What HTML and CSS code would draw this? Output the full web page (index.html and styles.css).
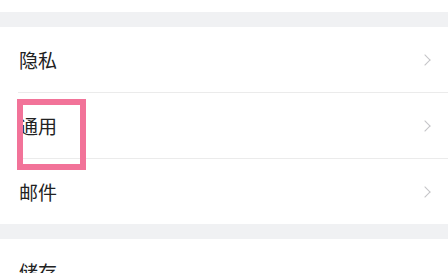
FILE: index.html
```html
<!DOCTYPE html>
<html lang="zh-CN">
<head>
    <meta charset="UTF-8">
    <meta name="viewport" content="width=device-width, initial-scale=1.0">
    <title>设置</title>
    <link rel="stylesheet" href="styles.css">
</head>
<body>
    <div class="screen">
        <div class="top-space"></div>
        <div class="gap"></div>
        <div class="group">
            <div class="row">
                <span class="label">隐私</span>
                <span class="chevron"></span>
            </div>
            <div class="row">
                <span class="label">通用</span>
                <span class="chevron"></span>
                <div class="highlight"></div>
            </div>
            <div class="row">
                <span class="label">邮件</span>
                <span class="chevron"></span>
            </div>
        </div>
        <div class="gap"></div>
        <div class="group">
            <div class="row">
                <span class="label">储存</span>
            </div>
        </div>
    </div>
</body>
</html>
```

FILE: styles.css
```css
body {
    margin: 0;
    padding: 0;
    background: #fff;
    font-family: "Noto Sans CJK SC", "Noto Sans", sans-serif;
}
.screen {
    width: 448px;
    height: 273px;
    overflow: hidden;
}
.top-space {
    height: 12px;
    background: #fff;
}
.gap {
    height: 15px;
    background: #f0f1f3;
}
.group {
    background: #fff;
}
.row {
    position: relative;
    display: flex;
    align-items: center;
    justify-content: space-between;
    height: 65px;
    margin-left: 18px;
    padding-right: 17px;
    border-bottom: 1px solid #ebebeb;
}
.group .row:last-child {
    border-bottom: none;
}
.label {
    font-size: 19px;
    color: #222;
    padding-left: 1px;
}
.chevron {
    width: 7px;
    height: 7px;
    border-top: 1.5px solid #c4c4c7;
    border-right: 1.5px solid #c4c4c7;
    transform: rotate(45deg);
    margin-right: 2px;
}
.highlight {
    position: absolute;
    left: -1px;
    top: 6px;
    width: 57px;
    height: 59px;
    border: 6px solid #f27399;
}
```
